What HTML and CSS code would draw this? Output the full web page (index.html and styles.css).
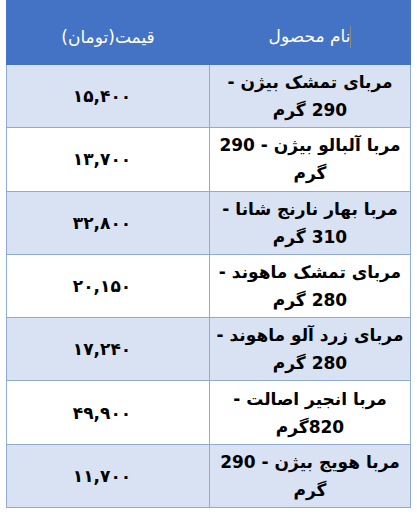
FILE: index.html
```html
<!DOCTYPE html>
<html lang="fa" dir="rtl">
<head>
<meta charset="utf-8">
<link rel="stylesheet" href="styles.css">
</head>
<body>
<table class="price-table">
  <thead>
    <tr class="head-row">
      <th class="name-col"><span class="caret"></span>نام محصول</th>
      <th class="price-col">قیمت(تومان)</th>
    </tr>
  </thead>
  <tbody>
    <tr class="odd"><td class="name">مربای تمشک بیژن -<br>290 گرم</td><td class="price">۱۵,۴۰۰</td></tr>
    <tr class="even"><td class="name">مربا آلبالو بیژن - 290<br>گرم</td><td class="price">۱۳,۷۰۰</td></tr>
    <tr class="odd"><td class="name">مربا بهار نارنج شانا -<br>310 گرم</td><td class="price">۳۲,۸۰۰</td></tr>
    <tr class="even"><td class="name">مربای تمشک ماهوند -<br>280 گرم</td><td class="price">۲۰,۱۵۰</td></tr>
    <tr class="odd"><td class="name">مربای زرد آلو ماهوند -<br>280 گرم</td><td class="price">۱۷,۲۴۰</td></tr>
    <tr class="even"><td class="name">مربا انجیر اصالت -<br>820گرم</td><td class="price">۴۹,۹۰۰</td></tr>
    <tr class="odd"><td class="name">مربا هویج بیژن - 290<br>گرم</td><td class="price">۱۱,۷۰۰</td></tr>
  </tbody>
</table>
</body>
</html>
```
FILE: styles.css
```css
html, body {
  margin: 0;
  padding: 0;
  background: #ffffff;
}
body {
  font-family: "DejaVu Sans", "Liberation Sans", sans-serif;
  color: #000;
}
.price-table {
  border-collapse: collapse;
  margin-right: 6px;
  width: 405px;
  table-layout: fixed;
}
.head-row th {
  background: #4472C4;
  color: #fff;
  font-weight: normal;
  font-size: 17px;
  height: 64px;
  padding: 8px 0 0 0;
  box-sizing: border-box;
  text-align: center;
  border: 1px solid #4472C4;
}
.name-col { width: 201px; }
.caret {
  display: inline-block;
  width: 1px;
  height: 22px;
  background: #8a8a8a;
  vertical-align: middle;
}
td {
  border: 1px solid #8EAADB;
  height: 63.3px;
  box-sizing: border-box;
  text-align: center;
  vertical-align: middle;
  padding: 0;
}
.odd td { background: #D9E2F3; }
.even td { background: #ffffff; }
.name {
  font-weight: bold;
  font-size: 17px;
  line-height: 28px;
}
.price {
  font-weight: bold;
  font-size: 17px;
  letter-spacing: 3px;
  padding-right: 12px;
}
```
